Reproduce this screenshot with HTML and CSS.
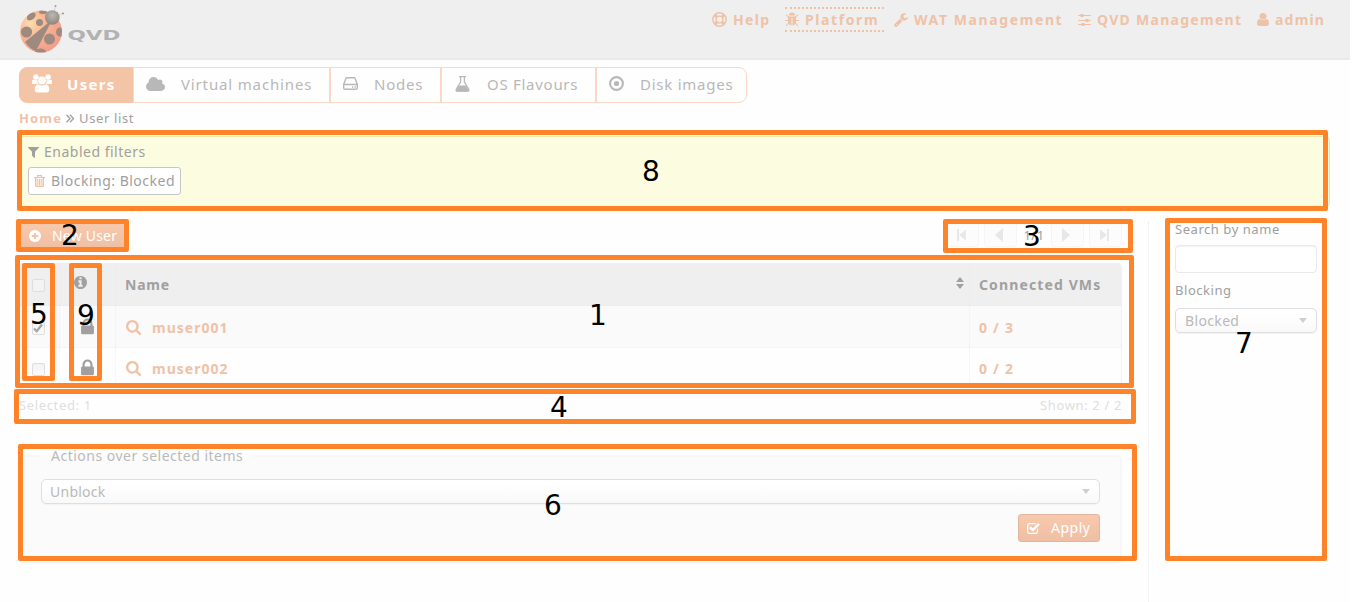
FILE: index.html
```html
<!DOCTYPE html>
<html lang="en">
<head>
<meta charset="utf-8">
<title>QVD - User list</title>
<link rel="stylesheet" href="styles.css">
</head>
<body>
<svg class="defs" width="0" height="0">
  <symbol id="lock" viewBox="0 0 1152 1792"><path d="M320 768h512v-192q0-106-75-181t-181-75-181 75-75 181v192zm832 96v576q0 40-28 68t-68 28h-960q-40 0-68-28t-28-68v-576q0-40 28-68t68-28h32v-192q0-184 132-316t316-132 316 132 132 316v192h32q40 0 68 28t28 68z"/></symbol>
  <symbol id="search" viewBox="64 128 1664 1664"><path d="M1216 832q0-185-131.5-316.5t-316.5-131.5-316.5 131.5-131.5 316.5 131.5 316.5 316.5 131.5 316.5-131.5 131.5-316.5zm512 832q0 52-38 90t-90 38q-54 0-90-38l-343-342q-179 124-399 124-143 0-273.5-55.5t-225-150-150-225-55.5-273.5 55.5-273.5 150-225 225-150 273.5-55.5 273.5 55.5 225 150 150 225 55.5 273.5q0 220-124 399l343 343q37 37 37 90z"/></symbol>
</svg>
<div class="page">
  <header class="header">
    <svg class="logo" width="106" height="50" viewBox="0 0 106 50">
      <defs>
        <radialGradient id="shell" cx="0.25" cy="0.3" r="0.85"><stop offset="0" stop-color="#fbdcae"/><stop offset="0.45" stop-color="#f8b392"/><stop offset="1" stop-color="#f29a8a"/></radialGradient>
        <radialGradient id="head" cx="0.5" cy="0.35" r="0.6"><stop offset="0" stop-color="#bdb8b2"/><stop offset="1" stop-color="#8f8984"/></radialGradient>
        <clipPath id="body"><circle cx="22" cy="27.500" r="21"/></clipPath>
      </defs>
      <path d="M34 10L36.500 2.500M37 12L44 9" stroke="#d9d5d1" fill="none"/>
      <circle cx="36.500" cy="2" r="1" fill="#a39e9a"/><circle cx="44" cy="9.500" r="1.100" fill="#a39e9a"/>
      <circle cx="22" cy="27.500" r="21" fill="url(#shell)"/>
      <g clip-path="url(#body)" fill="#9f8a7f">
        <path d="M29 19L6 38Q11 45 17 47L31 20z"/>
        <circle cx="7.500" cy="28" r="5.600"/><circle cx="20.500" cy="18.500" r="3.500"/><ellipse cx="12" cy="12.500" rx="5" ry="3.200" transform="rotate(-38 12 12)"/><ellipse cx="24" cy="8" rx="4" ry="2"/>
        <circle cx="30.500" cy="35" r="5.500"/><ellipse cx="41" cy="28" rx="4" ry="4.500"/><ellipse cx="21.500" cy="48" rx="5.500" ry="3.500"/>
      </g>
      <circle cx="33.300" cy="13.500" r="7.300" fill="url(#head)"/>
      <text class="logo-text" x="48.500" y="36" textLength="53" lengthAdjust="spacingAndGlyphs">QVD</text>
    </svg>
    <nav class="topnav">
      <a class="top-item help"><svg width="15" height="15" viewBox="0 0 15 15" fill="none" stroke="currentColor"><circle cx="7.500" cy="7.500" r="6.700" stroke-width="1.500"/><circle cx="7.500" cy="7.500" r="3.400" stroke-width="1.400"/><path d="M2.700 2.700l2.500 2.500M12.300 2.700L9.800 5.200M2.700 12.300l2.500-2.500M12.300 12.300L9.800 9.800" stroke-width="3"/></svg><span>Help</span></a>
      <a class="top-item platform"><svg width="14" height="15" viewBox="0 0 14 15"><path d="M4 3.500a3 3 0 0 1 6 0z" fill="currentColor"/><path d="M3 4.500h8V9.500q0 3.500-3.500 4V6h-1v7.500Q3 13 3 9.500z" fill="currentColor"/><path d="M3.500 5.500L1.500 3M10.500 5.500L12.500 3M3 8.500H.5M11 8.500h2.500M3.500 11L1.500 13.500M10.500 11L12.500 13.500" stroke="currentColor" stroke-width="1.200" fill="none" stroke-linecap="round"/></svg><span>Platform</span></a>
      <a class="top-item wat"><svg width="14" height="14" viewBox="80 110 1660 1660"><path fill="currentColor" d="M448 1472q0-26-19-45t-45-19-45 19-19 45 19 45 45 19 45-19 19-45zm644-420l-682 682q-37 37-90 37-52 0-91-37l-106-108q-38-36-38-90 0-53 38-91l681-681q39 98 114.500 173.500t173.500 114.500zm634-435q0 39-23 106-47 134-164.500 217.500t-258.500 83.500q-185 0-316.500-131.500t-131.500-316.500 131.500-316.500 316.500-131.500q58 0 121.500 16.500t107.500 46.500q16 11 16 28t-16 28l-293 169v224l193 107q5-3 79-48.500t135.500-81 70.500-35.500q15 0 23.500 10t8.500 25z"/></svg><span>WAT Management</span></a>
      <a class="top-item qvd"><svg width="13" height="12" viewBox="0 0 13 12"><path d="M0 1.500h13M0 6.500h13M0 10.500h13" stroke="currentColor" stroke-width="1"/><path d="M2.500 0h3v3h-3zM7.500 5h3v3h-3zM3.500 9h3v3h-3z" fill="currentColor"/></svg><span>QVD Management</span></a>
      <a class="top-item admin"><svg width="12" height="13" viewBox="256 128 1280 1536" preserveAspectRatio="none"><path fill="currentColor" d="M1536 1399q0 109-62.500 187t-150.500 78h-854q-88 0-150.500-78t-62.500-187q0-85 8.500-160.500t31.500-152 58.500-131 94-89 134.500-34.500q131 128 313 128t313-128q76 0 134.500 34.500t94 89 58.500 131 31.500 152 8.500 160.500zm-256-887q0 159-112.500 271.500t-271.500 112.500-271.500-112.500-112.500-271.500 112.500-271.500 271.500-112.500 271.500 112.500 112.500 271.500z"/></svg><span>admin</span></a>
    </nav>
  </header>

  <nav class="tabs">
    <a class="tab active"><svg width="20" height="19" viewBox="0 0 20 19" fill="currentColor"><circle cx="3.900" cy="3" r="2.700"/><circle cx="16.100" cy="3" r="2.700"/><path d="M0 9.500V8q0-2.500 1.500-2.500 2.400 1.300 4 .4Q5 8.500 6.200 10H1.500Q0 10 0 9.500zM20 9.500V8q0-2.500-1.500-2.500-2.400 1.300-4 .4.500 2.600-.7 4.100h4.700Q20 10 20 9.500z"/><circle cx="10" cy="6.500" r="3.900"/><path d="M6.300 10.300q3.700 2.800 7.400 0 3.500.2 3.500 5.500 0 2.700-2.700 2.700H5.500Q2.800 18.500 2.800 15.800q0-5.300 3.500-5.500z"/></svg><span>Users</span></a>
    <a class="tab vms"><svg width="19" height="14" viewBox="64 128 1920 1408"><path fill="currentColor" d="M1984 1152q0 159-112.500 271.500t-271.500 112.500h-1088q-185 0-316.500-131.500t-131.500-316.500q0-132 71-241.500t187-163.500q-2-28-2-43 0-212 150-362t362-150q158 0 286.500 88t187.500 230q70-62 166-62 106 0 181 75t75 181q0 75-41 138 129 30 213 134.500t84 239.500z"/></svg><span>Virtual machines</span></a>
    <a class="tab nodes"><svg width="15" height="13" viewBox="0 0 15 13" fill="none" stroke="currentColor" stroke-width="1.400"><path d="M.7 7.500v3.500q0 1.300 1.300 1.300h11q1.300 0 1.300-1.300V7.500zM.8 7.200L2.700 1.700Q3 .7 4.200.7h6.600q1.200 0 1.500 1l1.900 5.500"/><path d="M9 10h1.300M11.500 10h1.300"/></svg><span>Nodes</span></a>
    <a class="tab os"><svg width="15" height="16" viewBox="0 0 15 16"><path d="M4 .6h7" stroke="currentColor" stroke-width="1.200"/><path d="M5.600.7V6L1.400 13q-1 2 .8 2h10.600q1.800 0 .8-2L9.400 6V.7" fill="none" stroke="currentColor" stroke-width="1.300"/><path d="M4.200 9.500h6.600l3 4.500q.5 1.500-1 1.500H2.200q-1.500 0-1-1.500z" fill="currentColor"/></svg><span>OS Flavours</span></a>
    <a class="tab images"><svg width="15" height="15" viewBox="0 0 15 15"><circle cx="7.500" cy="7.500" r="6.400" fill="none" stroke="currentColor" stroke-width="2.100"/><circle cx="7.500" cy="7.500" r="2.600" fill="currentColor"/></svg><span>Disk images</span></a>
  </nav>

  <div class="crumbs"><b>Home</b><svg width="8" height="9" viewBox="0 0 8 9"><path d="M.5.7L4 4.500.5 8.300M4 .7L7.500 4.500 4 8.300" fill="none" stroke="currentColor" stroke-width="1.300"/></svg><span>User list</span></div>

  <section class="filters">
    <div class="filters-title"><svg width="11" height="11" viewBox="190 256 1412 1408"><path fill="currentColor" d="M1595 295q17 41-14 70l-493 493v742q0 42-39 59-13 5-25 5-27 0-45-19l-256-256q-19-19-19-45v-486l-493-493q-31-29-14-70 17-39 59-39h1280q42 0 59 39z"/></svg><span>Enabled filters</span></div>
    <div class="chip"><svg width="11" height="12" viewBox="0 0 11 12" fill="none" stroke="currentColor"><path d="M0 2.500h11M3.500 2V.6h4V2" stroke-width="1.200"/><path d="M1.700 3v7.300q0 1.100 1.100 1.100h5.400q1.100 0 1.100-1.100V3" stroke-width="1.500"/><path d="M3.800 4v6.500M5.500 4v6.500M7.200 4v6.500" stroke-width="1.100"/></svg><span>Blocking: Blocked</span></div>
  </section>

  <div class="columns">
    <main class="main">
      <div class="toolbar">
        <a class="btn new-user"><svg width="12" height="12" viewBox="0 0 12 12"><circle cx="6" cy="6" r="6" fill="#fff"/><path d="M6 2.700v6.600M2.700 6h6.600" stroke="#f3c3a7" stroke-width="1.800"/></svg><span>New User</span></a>
        <div class="pager">
          <a class="page-btn first"><svg width="9" height="12" viewBox="0 0 8 11"><path d="M0 0h1.800v11H0zM8 .5v10L2 5.500z" fill="currentColor"/></svg></a>
          <a class="page-btn"><svg width="8" height="14" viewBox="0 0 8 13" preserveAspectRatio="none"><path d="M8 0v13L0 6.500z" fill="currentColor"/></svg></a>
          <span class="page-no">1/1</span>
          <a class="page-btn"><svg width="8" height="14" viewBox="0 0 8 13" preserveAspectRatio="none"><path d="M0 0v13l8-6.500z" fill="currentColor"/></svg></a>
          <a class="page-btn"><svg width="9" height="12" viewBox="0 0 8 11"><path d="M6.200 0H8v11H6.200zM0 .5v10l6-5z" fill="currentColor"/></svg></a>
        </div>
      </div>
      <div class="table">
        <div class="row head">
          <div class="cell check"><i class="box"></i></div>
          <div class="cell info"><svg width="13" height="13" viewBox="128 128 1536 1536"><path fill="currentColor" d="M1152 1376v-160q0-14-9-23t-23-9h-96v-512q0-14-9-23t-23-9h-320q-14 0-23 9t-9 23v160q0 14 9 23t23 9h96v320h-96q-14 0-23 9t-9 23v160q0 14 9 23t23 9h448q14 0 23-9t9-23zm-128-896v-160q0-14-9-23t-23-9h-192q-14 0-23 9t-9 23v160q0 14 9 23t23 9h192q14 0 23-9t9-23zm640 416q0 209-103 385.500t-279.500 279.500-385.500 103-385.500-103-279.500-279.500-103-385.500 103-385.500 279.500-279.500 385.500-103 385.500 103 279.500 279.500 103 385.500z"/></svg></div>
          <div class="cell name"><span>Name</span><svg class="sort" width="8" height="12" viewBox="0 0 8 12"><path d="M4 0l4 5H0zM4 12l4-5H0z" fill="currentColor"/></svg></div>
          <div class="cell vm-head"><span>Connected VMs</span></div>
        </div>
        <div class="row odd">
          <div class="cell check"><i class="box"><svg width="10" height="10" viewBox="0 0 10 10"><path d="M1 5.500l2.700 2.800L9 1.500" fill="none" stroke="#a6a6a6" stroke-width="2.200"/></svg></i></div>
          <div class="cell state"><svg width="13" height="20"><use href="#lock"/></svg></div>
          <div class="cell name link"><svg width="15" height="15"><use href="#search"/></svg><span>muser001</span></div>
          <div class="cell link count"><span>0 / 3</span></div>
        </div>
        <div class="row">
          <div class="cell check"><i class="box"></i></div>
          <div class="cell state"><svg width="13" height="20"><use href="#lock"/></svg></div>
          <div class="cell name link"><svg width="15" height="15"><use href="#search"/></svg><span>muser002</span></div>
          <div class="cell link count"><span>0 / 2</span></div>
        </div>
      </div>
      <div class="summary"><span>Selected: 1</span><span>Shown: 2 / 2</span></div>
      <section class="actions">
        <div class="legend">Actions over selected items</div>
        <div class="select"><span>Unblock</span><i class="caret"></i></div>
        <a class="btn apply"><svg width="13" height="12" viewBox="0 0 13 12" fill="none" stroke="#fff"><path d="M10.500 7v2.500q0 1.800-1.800 1.800H2.500Q.7 11.300.7 9.500v-6Q.7 1.700 2.500 1.700h6.300" stroke-width="1.300"/><path d="M3 5.200l2.800 2.900L12 1.800" stroke-width="2.400"/></svg><span>Apply</span></a>
      </section>
    </main>
    <aside class="side">
      <div class="field-label">Search by name</div>
      <div class="input"></div>
      <div class="field-label blocking">Blocking</div>
      <div class="select small"><span>Blocked</span><i class="caret"></i></div>
    </aside>
  </div>
</div>

<div class="callouts">
  <div class="mark m8"></div><div class="mark m2"></div><div class="mark m3"></div>
  <div class="mark m1"></div><div class="mark m5"></div><div class="mark m9"></div>
  <div class="mark m4"></div><div class="mark m6"></div><div class="mark m7"></div>
  <b class="num n8">8</b><b class="num n2">2</b><b class="num n3">3</b>
  <b class="num n1">1</b><b class="num n5">5</b><b class="num n9">9</b>
  <b class="num n4">4</b><b class="num n6">6</b><b class="num n7">7</b>
</div>
</body>
</html>
```
FILE: styles.css
```css
* { box-sizing: border-box; }
body {
  margin: 0;
  background: #fff;
  font-family: "Noto Sans", "Open Sans", sans-serif;
  font-size: 14px;
  letter-spacing: .5px;
  color: #a0a0a0;
  height: 602px;
  overflow: hidden;
  position: relative;
}
svg { display: block; flex: none; }
span { white-space: nowrap; }
.defs { position: absolute; }
.page { width: 1350px; height: 602px; background: #fefefe; }

/* header */
.header {
  height: 60px;
  background: #efefef;
  border-bottom: 2px solid #eaeaea;
  display: flex;
  justify-content: space-between;
  padding: 4px 0 0 19px;
}
.logo-text {
  font: bold 14.500px "DejaVu Sans", sans-serif;
  letter-spacing: 0;
  fill: #b2b2b2;
}
.topnav {
  display: grid;
  grid-template-columns: 73px 109px 184px 179px 93px;
  align-items: start;
  padding-top: 3px;
  color: #eec2a7;
  font-weight: bold;
}
.top-item {
  display: flex;
  align-items: center;
  gap: 6px;
  height: 25px;
  letter-spacing: 1.300px;
}
.platform {
  width: 99px;
  border-top: 2px dotted #f2c1a3;
  border-bottom: 2px dotted #f2c1a3;
  letter-spacing: 1.600px;
}
.wat { letter-spacing: 1.600px; }
.qvd { letter-spacing: 1.280px; }
.admin { letter-spacing: 1.200px; }

/* section tabs */
.tabs { display: flex; margin: 7px 0 0 19px; height: 36px; }
.tab {
  display: flex;
  align-items: center;
  border: 1px solid #fad8c5;
  font-size: 15px;
  letter-spacing: .850px;
  color: #b8b8b8;
  padding: 0 0 2px 12px;
}
.tab svg { margin-bottom: 1px; }
.active {
  width: 114px;
  background: #f4c4a7;
  border-color: #f4c4a7;
  color: #fff;
  font-weight: bold;
  letter-spacing: 1.300px;
  border-radius: 8px 0 0 8px;
  gap: 15px;
}
.vms { width: 197px; gap: 16px; }
.nodes { width: 111px; gap: 16px; letter-spacing: .750px; }
.os { width: 155px; gap: 17px; padding-left: 13px; letter-spacing: .720px; }
.images { width: 151px; gap: 16px; border-radius: 0 8px 8px 0; letter-spacing: .750px; }

.crumbs {
  display: flex;
  align-items: center;
  height: 29px;
  margin: 0 0 4px 19px;
  font-size: 13px;
  letter-spacing: .620px;
}
.crumbs b { color: #eec2a7; letter-spacing: 1.150px; }
.crumbs svg { margin: 1px 5px 0 4px; }

/* active filters */
.filters {
  width: 1311px;
  height: 71px;
  margin-left: 19px;
  padding: 4px 8px 0;
  background: #fcfce0;
  border: 1px solid #e8e8b0;
  border-radius: 4px;
}
.filters-title { display: flex; align-items: center; gap: 5px; height: 20px; margin-bottom: 6px; }
.filters-title svg { margin-top: 2px; }
.chip {
  display: flex;
  align-items: center;
  gap: 6px;
  width: 153px;
  height: 28px;
  padding: 0 0 2px 5px;
  background: #fff;
  border: 1px solid #c6c6c6;
  border-radius: 3px;
}
.chip svg { color: #eec2a7; margin-top: 2px; }

.columns { display: flex; margin: 15px 0 0 19px; height: 380px; }
.main { width: 1130px; padding-right: 26px; border-right: 1px dotted #ececec; }
.toolbar { display: flex; justify-content: space-between; height: 41px; }
.btn {
  display: flex;
  align-items: center;
  background: linear-gradient(#f9c9ae, #eebfa3);
  border: 1px solid #e0b79e;
  border-radius: 3px;
  color: #fff;
}
.new-user { width: 108px; height: 27px; padding-left: 9px; gap: 11px; letter-spacing: .200px; }
.pager { display: flex; gap: 5px; height: 25px; }
.page-btn {
  width: 33px;
  display: flex;
  justify-content: center;
  align-items: center;
  padding-right: 3px;
  border: 1px solid #f5f5f5;
  border-radius: 3px;
  background: #fcfcfc;
  color: #e7e7e7;
}
.first { width: 32px; }
.page-no { width: 24px; font-size: 13px; text-align: center; line-height: 26px; }

.table { border-right: 1px solid #f1f1f1; border-radius: 4px; height: 125px; overflow: hidden; }
.row { display: grid; grid-template-columns: 41px 56px 854px 152px; height: 41px; border-bottom: 1px dotted #f0f0f0; }
.head { height: 43px; background: #efefef; font-weight: bold; border-color: #eaeaea; }
.odd { height: 42px; background: #fafafa; }
.odd .cell { padding-top: 1px; }
.cell { display: flex; align-items: center; border-right: 1px dotted #efefef; padding-left: 9px; }
.head .cell { border-color: #e9e9e9; }
.cell:last-child { border-right: 0; }
.check { padding-left: 13px; }
.info { padding: 0 0 3px 14px; }
.state { padding-left: 21px; }
.box {
  width: 13px;
  height: 13px;
  border: 1px solid #dedede;
  border-radius: 2px;
  background: linear-gradient(#f3f3f3, #fafafa);
  margin-top: 2px;
  display: flex;
}
.head .box { background: #f3f3f3; }
.name span { letter-spacing: .800px; }
.sort { margin: 0 5px 3px auto; }
.vm-head { letter-spacing: 1.120px; }
.link { color: #efc2a7; font-weight: bold; letter-spacing: 1px; gap: 11px; }
.name.link { padding-left: 10px; }
.name.link span { letter-spacing: 1px; }
.link svg { fill: currentColor; }
.state svg { fill: #a0a0a0; }
.count { letter-spacing: 1.200px; }

.summary {
  display: flex;
  justify-content: space-between;
  height: 67px;
  line-height: 35px;
  font-size: 13px;
  letter-spacing: .640px;
  color: #dfdfdf;
}

/* bulk actions */
.actions {
  height: 109px;
  background: #fbfbfb;
  border: 2px solid #f7f7f7;
  border-radius: 5px;
  padding: 0 20px;
  display: flex;
  flex-direction: column;
}
.legend {
  margin: -12px 0 12px 0;
  width: 212px;
  padding-left: 10px;
  height: 22px;
  flex: none;
  line-height: 22px;
  color: #bababa;
  background: linear-gradient(#fefefe 0 10px, #fbfbfb 10px);
  white-space: nowrap;
}
.select {
  height: 25px;
  flex: none;
  width: 1059px;
  display: flex;
  align-items: center;
  justify-content: space-between;
  padding: 0 9px 1px 8px;
  border: 1px solid #dfdfdf;
  border-radius: 5px;
  background: linear-gradient(#fff 20%, #f9f9f9);
  box-shadow: 0 1px 1px #f3f3f3;
  color: #b9b9b9;
  letter-spacing: .250px;
}
.caret { border: 4px solid transparent; border-top: 5px solid #cfcfcf; border-bottom: 0; }
.apply { width: 82px; height: 28px; flex: none; margin: 10px 0 0 auto; padding: 0 0 1px 8px; gap: 11px; }

/* search panel */
.side { width: 168px; padding-left: 26px; font-size: 13px; letter-spacing: .550px; }
.field-label { line-height: 14px; height: 23px; }
.input { width: 142px; height: 28px; border: 1px solid #e9e9e9; border-radius: 4px; background: #fff; box-shadow: inset 0 1px 1px #f3f3f3; }
.blocking { margin-top: 10px; height: 25px; }
.small { width: 142px; font-size: 14px; letter-spacing: .350px; padding-left: 9px; }

/* numbered callouts over the page */
.mark { position: absolute; border: 5px solid #ff8429; border-radius: 2px; }
.m8 { left: 17px; top: 130px; width: 1311px; height: 81px; }
.m2 { left: 16px; top: 219px; width: 113px; height: 33px; }
.m3 { left: 943px; top: 219px; width: 190px; height: 34px; }
.m1 { left: 15px; top: 255px; width: 1119px; height: 133px; }
.m5 { left: 22px; top: 263px; width: 33px; height: 118px; }
.m9 { left: 69px; top: 263px; width: 33px; height: 118px; }
.m4 { left: 14px; top: 389px; width: 1122px; height: 35px; }
.m6 { left: 18px; top: 444px; width: 1119px; height: 117px; }
.m7 { left: 1165px; top: 218px; width: 162px; height: 343px; }
.num { position: absolute; font: 28px/28px "DejaVu Sans", sans-serif; letter-spacing: 0; color: #000; }
.n8 { left: 642px; top: 158px; }
.n2 { left: 61px; top: 222px; }
.n3 { left: 1023px; top: 223px; }
.n1 { left: 589px; top: 302px; }
.n5 { left: 30px; top: 301px; }
.n9 { left: 77px; top: 302px; }
.n4 { left: 550px; top: 394px; }
.n6 { left: 544px; top: 492px; }
.n7 { left: 1235px; top: 330px; }
```
